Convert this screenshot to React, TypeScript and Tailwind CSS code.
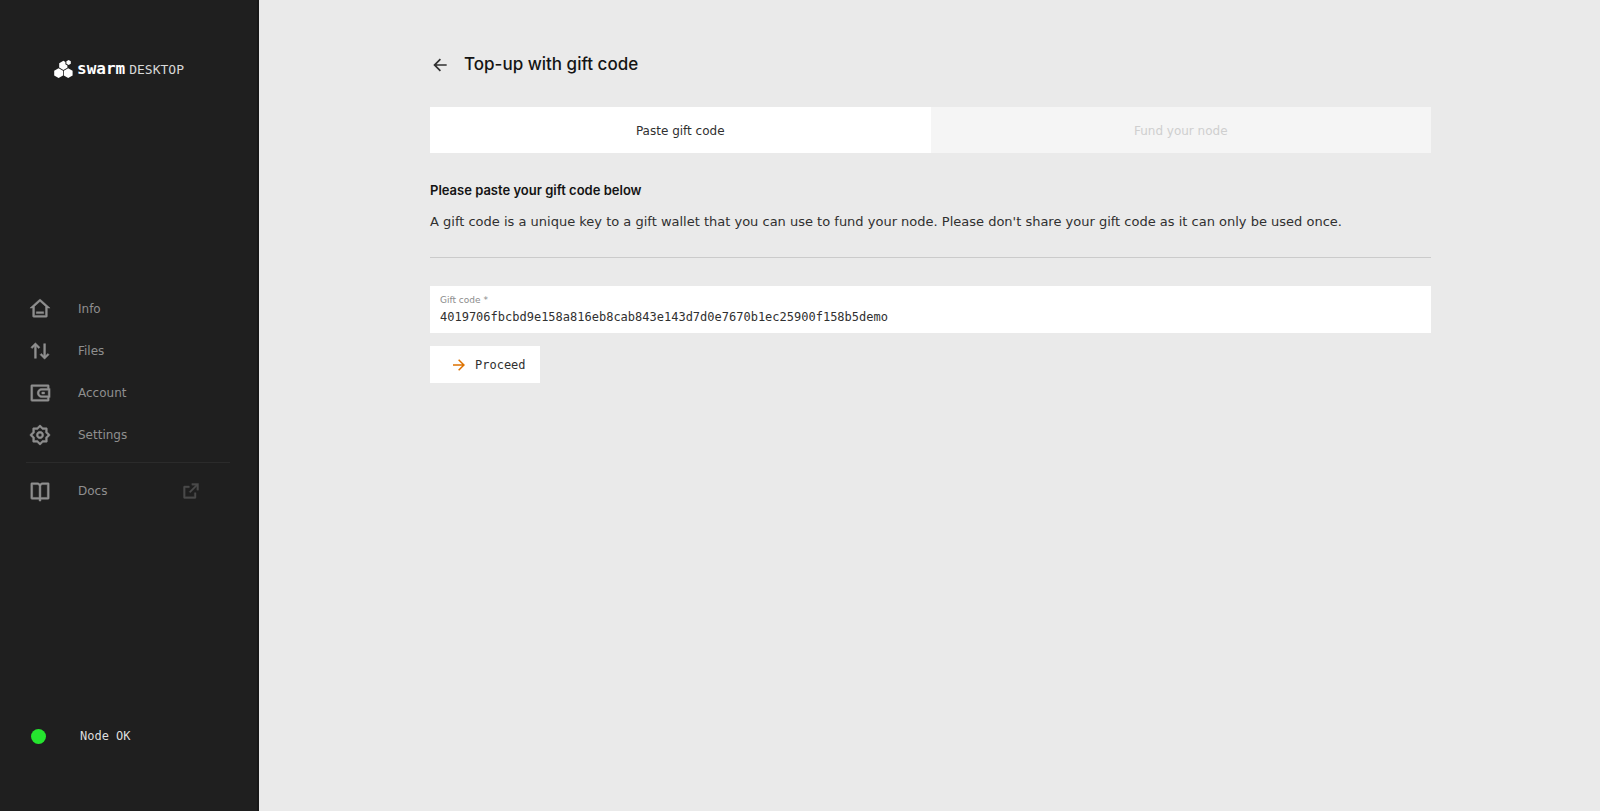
import { useState } from 'react';
import {
  RiArrowLeftLine,
  RiArrowRightLine,
  RiArrowUpDownLine,
  RiBookOpenLine,
  RiExternalLinkLine,
  RiHome3Line,
  RiSettings2Line,
  RiWallet3Line,
} from 'react-icons/ri';
import type { IconType } from 'react-icons';

interface NavItem {
  label: string;
  icon: IconType;
  href: string;
  external?: boolean;
}

const navItems: NavItem[] = [
  { label: 'Info', icon: RiHome3Line, href: '#info' },
  { label: 'Files', icon: RiArrowUpDownLine, href: '#files' },
  { label: 'Account', icon: RiWallet3Line, href: '#account' },
  { label: 'Settings', icon: RiSettings2Line, href: '#settings' },
];

const steps = ['Paste gift code', 'Fund your node'];

function Logo() {
  return (
    <a href="#home" className="flex items-center gap-1 pl-[54px] h-5 text-white">
      <svg viewBox="0 0 19 18" className="w-[19px] h-[18px]" fill="currentColor">
        <path d="M4.6 8.2 9 10.7v4.7L4.6 18 .2 15.4v-4.7z" />
        <path d="M14.2 8.2l4.4 2.5v4.7L14.2 18l-4.4-2.6v-4.7z" />
        <path d="M9.4.8l2 1.1v2.3l2 1.2v2.3L9.4 10 5.2 7.6V3.2z" />
        <path d="M14.6 0l2.2 1.2v2.6l-2.2 1.2-2.2-1.2V1.2z" />
      </svg>
      <span className="flex items-baseline gap-1 font-['DejaVu_Sans_Mono',monospace]">
        <span className="text-base leading-5 font-bold">swarm</span>
        <span className="text-[13px] leading-5 text-[#d8d8d8]">DESKTOP</span>
      </span>
    </a>
  );
}

function NavLink({ label, icon: Icon, href, external }: NavItem) {
  return (
    <a href={href} className="flex items-center h-[42px] pl-[29px] pr-14 text-xs text-[#8f8f8f]">
      <Icon strokeWidth={0.5} className="size-[22px] mr-[27px]" />
      <span className="flex-1">{label}</span>
      {external && <RiExternalLinkLine strokeWidth={0.5} className="size-5 text-[#4a4a4a]" />}
    </a>
  );
}

function Sidebar() {
  return (
    <aside className="flex flex-col justify-between w-[259px] shrink-0 pt-[59px] pb-[60px] bg-[#1f1f1f] border-r-2 border-[#181818]">
      <Logo />
      <nav>
        {navItems.map((item) => (
          <NavLink key={item.label} {...item} />
        ))}
        <hr className="mt-1.5 mb-[7px] ml-[26px] mr-[27px] border-[#2b2b2b]" />
        <NavLink label="Docs" icon={RiBookOpenLine} href="#docs" external />
      </nav>
      <div className="flex items-center h-[30px] gap-[34px] pl-[31px]">
        <span className="size-[15px] rounded-full bg-[#25e52f]" />
        <span className="font-['DejaVu_Sans_Mono',monospace] text-xs text-[#dddddd]">Node OK</span>
      </div>
    </aside>
  );
}

export default function App() {
  const [giftCode, setGiftCode] = useState(
    '4019706fbcbd9e158a816eb8cab843e143d7d0e7670b1ec25900f158b5demo',
  );

  return (
    <div className="flex min-h-screen bg-[#eaeaea] font-['DejaVu_Sans',sans-serif] text-[#303030]">
      <Sidebar />
      <main className="flex-1 pl-[34px] pr-8">
        <div className="max-w-[1001px] mx-auto pt-[53px]">
          <div className="flex items-center h-6 gap-3.5">
            <button type="button" aria-label="Back">
              <RiArrowLeftLine className="size-5" />
            </button>
            <h1 className="font-[Inter,sans-serif] text-[17px] font-medium text-[#141414]">
              Top-up with gift code
            </h1>
          </div>

          {/* Steps */}
          <ol className="grid grid-cols-2 mt-[30px]">
            {steps.map((step, i) => (
              <li
                key={step}
                className={`flex items-center justify-center h-[46px] pt-0.5 text-xs ${
                  i === 0 ? 'bg-white' : 'bg-[#f5f5f5] text-[#cfcfcf]'
                }`}
              >
                {step}
              </li>
            ))}
          </ol>

          <h2 className="mt-[27px] font-[Inter,sans-serif] text-[13px] leading-5 font-semibold text-[#141414]">
            Please paste your gift code below
          </h2>
          <p className="mt-3 text-[13px] leading-5">
            A gift code is a unique key to a gift wallet that you can use to fund your node. Please
            don't share your gift code as it can only be used once.
          </p>
          <hr className="mt-[25px] border-[#cbcbcb]" />

          <form onSubmit={(e) => e.preventDefault()}>
            <div className="flex flex-col mt-7 h-[47px] px-[10px] pt-2 bg-white">
              <label htmlFor="gift-code" className="text-[9px] leading-3 text-[#8c8c8c]">
                Gift code *
              </label>
              <input
                id="gift-code"
                type="text"
                value={giftCode}
                onChange={(e) => setGiftCode(e.target.value)}
                className="h-[22px] font-['DejaVu_Sans_Mono',monospace] text-xs outline-none"
              />
            </div>
            <button
              type="submit"
              className="flex items-center h-[37px] gap-[7px] mt-[13px] pl-5 pr-3.5 bg-white font-['DejaVu_Sans_Mono',monospace] text-xs"
            >
              <RiArrowRightLine className="size-[18px] text-[#dd7200]" />
              Proceed
            </button>
          </form>
        </div>
      </main>
    </div>
  );
}
